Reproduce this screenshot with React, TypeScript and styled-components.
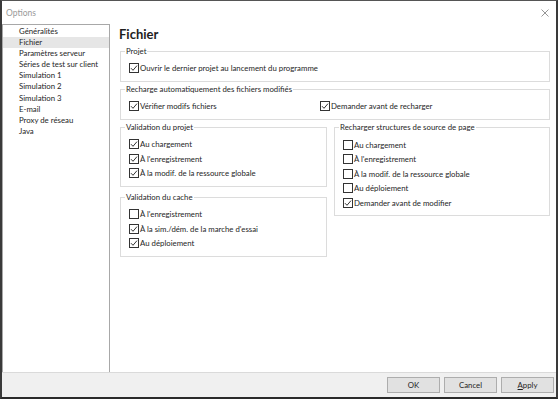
import styled, { createGlobalStyle } from 'styled-components';

const GlobalStyle = createGlobalStyle`
  html, body {
    margin: 0;
    padding: 0;
    background: #fff;
  }
  body {
    font-family: Lato, "Noto Sans", sans-serif;
    font-size: 7.8px;
    color: #1e1e1e;
  }
`;

const navItems = [
  'Généralités',
  'Fichier',
  'Paramètres serveur',
  'Séries de test sur client',
  'Simulation 1',
  'Simulation 2',
  'Simulation 3',
  'E-mail',
  'Proxy de réseau',
  'Java',
];

function Check({ checked }: { checked?: boolean }) {
  return (
    <StyledBox>
      {checked && (
        <svg width="8" height="8" viewBox="0 0 8 8">
          <path d="M1 4.2 L3 6.3 L7 1.6" fill="none" stroke="#333" strokeWidth="1" />
        </svg>
      )}
    </StyledBox>
  );
}

function CheckRow({ label, checked }: { label: string; checked?: boolean }) {
  return (
    <StyledRow>
      <Check checked={checked} />
      <span>{label}</span>
    </StyledRow>
  );
}

function App() {
  return (
    <>
      <GlobalStyle />
      <StyledWindow>
        <StyledTitleBar>
          <span>Options</span>
          <StyledClose>
            <svg width="8" height="8" viewBox="0 0 8 8">
              <path d="M0.5 0.5 L7.5 7.5 M7.5 0.5 L0.5 7.5" stroke="#8a8a8a" strokeWidth="0.9" />
            </svg>
          </StyledClose>
        </StyledTitleBar>
        <StyledBody>
          <StyledNav>
            {navItems.map(item => (
              <StyledNavItem key={item} selected={item === 'Fichier'}>
                {item}
              </StyledNavItem>
            ))}
          </StyledNav>
          <StyledContent>
            <StyledHeading>Fichier</StyledHeading>
            <StyledGroup>
              <legend>Projet</legend>
              <CheckRow checked label="Ouvrir le dernier projet au lancement du programme" />
            </StyledGroup>
            <StyledGroup>
              <legend>Recharge automatiquement des fichiers modifiés</legend>
              <StyledSplitRow>
                <CheckRow checked label="Vérifier modifs fichiers" />
                <CheckRow checked label="Demander avant de recharger" />
              </StyledSplitRow>
            </StyledGroup>
            <StyledColumns>
              <StyledColumn>
                <StyledGroup>
                  <legend>Validation du projet</legend>
                  <CheckRow checked label="Au chargement" />
                  <CheckRow checked label="À l'enregistrement" />
                  <CheckRow checked label="À la modif. de la ressource globale" />
                </StyledGroup>
                <StyledGroup $gap={5}>
                  <legend>Validation du cache</legend>
                  <CheckRow label="À l'enregistrement" />
                  <CheckRow checked label="À la sim./dém. de la marche d'essai" />
                  <CheckRow checked label="Au déploiement" />
                </StyledGroup>
              </StyledColumn>
              <StyledColumn>
                <StyledGroup $gap={2.5}>
                  <legend>Recharger structures de source de page</legend>
                  <CheckRow label="Au chargement" />
                  <CheckRow label="À l'enregistrement" />
                  <CheckRow label="À la modif. de la ressource globale" />
                  <CheckRow label="Au déploiement" />
                  <CheckRow checked label="Demander avant de modifier" />
                </StyledGroup>
              </StyledColumn>
            </StyledColumns>
          </StyledContent>
        </StyledBody>
        <StyledFooter>
          <StyledButton>OK</StyledButton>
          <StyledButton>Cancel</StyledButton>
          <StyledButton>
            <u>A</u>pply
          </StyledButton>
        </StyledFooter>
      </StyledWindow>
    </>
  );
}

export default App;

const StyledWindow = styled.div`
  width: 558px;
  height: 399px;
  box-sizing: border-box;
  border-top: 1px solid #555;
  border-left: 2px solid #3a3a3a;
  border-right: 2px solid #3a3a3a;
  border-bottom: 2px solid #2a2a2a;
  display: flex;
  flex-direction: column;
  background: #fff;
`;

const StyledTitleBar = styled.div`
  height: 23px;
  display: flex;
  align-items: center;
  justify-content: space-between;
  padding: 0 6px 0 4px;
  color: #9a9a9a;
  font-size: 8.5px;
`;

const StyledClose = styled.div`
  display: flex;
  margin-right: 1px;
`;

const StyledBody = styled.div`
  flex: 1;
  display: flex;
  border-bottom: 1px solid #dadada;
`;

const StyledNav = styled.div`
  width: 108px;
  border: 1px solid #a8a8a8;
  border-bottom: none;
  padding-top: 0.5px;
  box-sizing: border-box;
`;

const StyledNavItem = styled.div<{ selected?: boolean }>`
  height: 11.2px;
  line-height: 11.2px;
  padding-left: 16px;
  white-space: nowrap;
  background: ${props => (props.selected ? '#e6e6e6' : 'transparent')};
`;

const StyledContent = styled.div`
  flex: 1;
  padding: 0 6px 0 10px;
  display: flex;
  flex-direction: column;
`;

const StyledHeading = styled.h1`
  margin: 0 0 0 -1px;
  font-size: 13px;
  font-weight: 700;
  height: 19.5px;
  line-height: 20px;
`;

const StyledGroup = styled.fieldset<{ $gap?: number }>`
  margin: ${props => props.$gap ?? 2}px 0 0 0;
  padding: 4.5px 6px 5px 8px;
  border: 1px solid #dcdcdc;
  min-width: 0;

  legend {
    padding: 0 1px;
    margin-left: -4px;
    line-height: 11px;
    font-size: 7.8px;
  }
`;

const StyledRow = styled.div`
  display: flex;
  align-items: center;
  height: 14.5px;
  gap: 1px;
  white-space: nowrap;
`;

const StyledSplitRow = styled.div`
  display: grid;
  grid-template-columns: 191px 1fr;
`;

const StyledBox = styled.span`
  width: 10px;
  height: 10px;
  box-sizing: border-box;
  border: 1px solid #333;
  background: #fff;
  display: inline-flex;
  align-items: center;
  justify-content: center;
  flex-shrink: 0;
`;

const StyledColumns = styled.div`
  display: grid;
  grid-template-columns: 207px 1fr;
  gap: 7px;
  align-items: start;
`;

const StyledColumn = styled.div`
  display: flex;
  flex-direction: column;
`;

const StyledFooter = styled.div`
  height: 24px;
  background: #f0f0f0;
  display: flex;
  align-items: center;
  justify-content: flex-end;
  gap: 4px;
  padding-right: 2px;
`;

const StyledButton = styled.button`
  width: 53px;
  height: 16px;
  padding: 0;
  background: #e1e1e1;
  border: 1px solid #adadad;
  font-family: Lato, "Noto Sans", sans-serif;
  font-size: 7.8px;
  color: #1e1e1e;
`;
